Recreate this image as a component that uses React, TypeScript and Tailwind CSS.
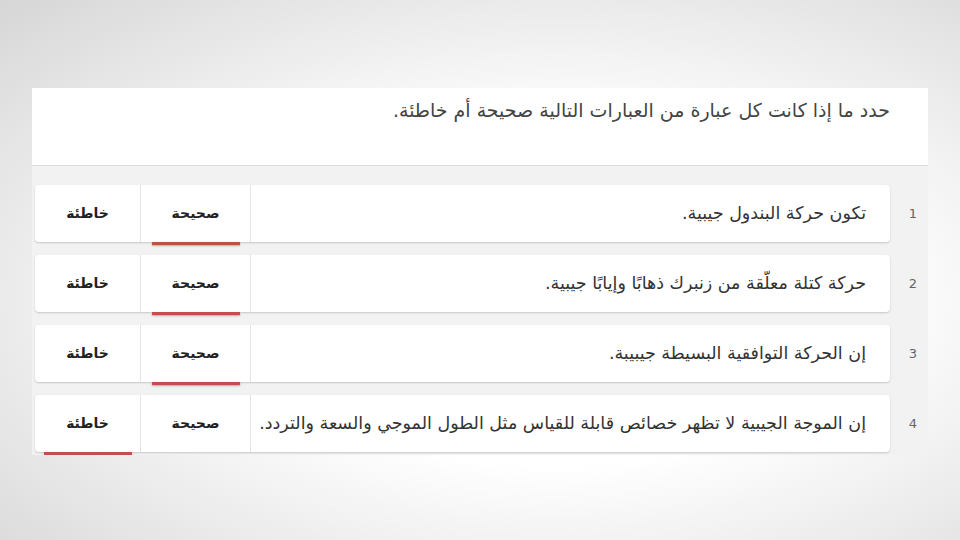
import React from 'react';

type Row = {
  n: number;
  text: string;
  answer: 'true' | 'false';
};

const rows: Row[] = [
  { n: 1, text: 'تكون حركة البندول جيبية.', answer: 'true' },
  { n: 2, text: 'حركة كتلة معلّقة من زنبرك ذهابًا وإيابًا جيبية.', answer: 'true' },
  { n: 3, text: 'إن الحركة التوافقية البسيطة جيبيبة.', answer: 'true' },
  { n: 4, text: 'إن الموجة الجيبية لا تظهر خصائص قابلة للقياس مثل الطول الموجي والسعة والتردد.', answer: 'false' },
];

const Option: React.FC<{ label: string; selected: boolean; className: string }> = ({ label, selected, className }) => (
  <div className={`relative flex items-center justify-center text-[14px] font-bold text-[#222] ${className}`}>
    {label}
    {selected && (
      <span className="absolute bottom-[-3px] left-1/2 -translate-x-1/2 w-[88px] h-[3px] bg-[#c0504d] shadow-[0_1px_2px_rgba(0,0,0,0.3)]" />
    )}
  </div>
);

const App: React.FC = () => {
  return (
    <div
      className="w-[960px] h-[540px] overflow-hidden bg-[radial-gradient(ellipse_at_58%_55%,#ffffff_40%,#d6d6d6_100%)] pt-[88px] px-[32px]"
      style={{ fontFamily: '"DejaVu Sans", "Noto Sans", sans-serif' }}
    >
      <div dir="rtl" className="h-[367px] overflow-hidden bg-[#f2f2f2]">
        {/* Question header */}
        <div className="h-[78px] bg-white border-b border-[#dcdcdc] pr-[38px] pt-[8px] text-[19px] text-[#444]">
          حدد ما إذا كانت كل عبارة من العبارات التالية صحيحة أم خاطئة.
        </div>

        {/* Statements */}
        <div className="flex flex-col gap-[13px] pt-[19px] pl-[3px]">
          {rows.map((row) => (
            <div key={row.n} className="flex items-center">
              <div className="w-[38px] shrink-0 pl-[8px] text-center text-[13px] text-[#666]">{row.n}</div>
              <div className="flex-1 h-[57px] flex bg-white rounded-[4px] shadow-[0_1px_2px_rgba(0,0,0,0.18)]">
                <div className="flex-1 flex items-center pr-[24px] border-l border-[#e4e4e4] text-[17.5px] text-[#333]">
                  {row.text}
                </div>
                <Option label="صحيحة" selected={row.answer === 'true'} className="w-[110px] border-l border-[#e4e4e4]" />
                <Option label="خاطئة" selected={row.answer === 'false'} className="w-[105px]" />
              </div>
            </div>
          ))}
        </div>
      </div>
    </div>
  );
};

export default App;
